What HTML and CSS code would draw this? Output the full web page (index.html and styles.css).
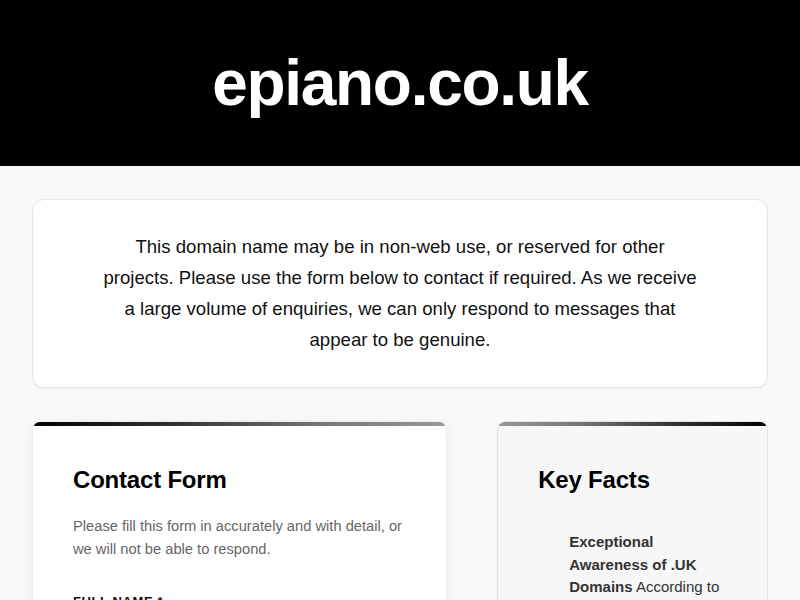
FILE: index.html
```html
<!DOCTYPE html>
<html lang="en">
<head>
<meta charset="utf-8">
<title>epiano.co.uk</title>
<link rel="stylesheet" href="styles.css">
</head>
<body>
<header class="site-header">
  <h1 class="site-title">epiano.co.uk</h1>
</header>
<main class="container">
  <section class="notice">
    <p>This domain name may be in non-web use, or reserved for other projects. Please use the form below to contact if required. As we receive a large volume of enquiries, we can only respond to messages that appear to be genuine.</p>
  </section>
  <div class="columns">
    <section class="card card-form">
      <h2 class="card-title">Contact Form</h2>
      <p class="card-intro">Please fill this form in accurately and with detail, or we will not be able to respond.</p>
      <form class="form">
        <label class="field-label">Full Name *</label>
        <input class="field-input" type="text">
      </form>
    </section>
    <aside class="card card-facts">
      <h2 class="card-title">Key Facts</h2>
      <ul class="facts">
        <li><strong>Exceptional Awareness of .UK Domains</strong> According to research, the vast majority of UK consumers recognise .uk domains.</li>
      </ul>
    </aside>
  </div>
</main>
</body>
</html>
```

FILE: styles.css
```css
* { box-sizing: border-box; }
html, body { margin: 0; padding: 0; }
body {
  font-family: "Liberation Sans", Arial, sans-serif;
  background: #f9f9f9;
  color: #000;
}
.site-header {
  background: #000;
  padding: 48px 16px;
  text-align: center;
}
.site-title {
  margin: 0;
  color: #fff;
  font-size: 64px;
  line-height: 70px;
  font-weight: 700;
  letter-spacing: -1.3px;
}
.container {
  padding: 33px 32px 40px;
}
.notice {
  background: #fff;
  border: 1px solid #e6e6e6;
  border-radius: 12px;
  padding: 31px 32px 32px;
  box-shadow: 0 1px 3px rgba(0,0,0,0.04);
}
.notice p {
  max-width: 600px;
  margin: 0 auto;
  text-align: center;
  font-size: 18.6px;
  line-height: 31px;
  color: #111;
}
.columns {
  margin-top: 33px;
  display: grid;
  grid-template-columns: 414fr 270fr;
  gap: 50px;
  align-items: start;
}
.card {
  position: relative;
  border-radius: 8px;
  overflow: hidden;
  padding: 43px 40px 40px;
}
.card::before {
  content: "";
  position: absolute;
  left: 0; right: 0; top: 0;
  height: 4px;
}
.card-form {
  background: #fff;
  border: 1px solid #ececec;
  box-shadow: 0 4px 14px rgba(0,0,0,0.06);
  min-height: 300px;
}
.card-form::before {
  background: linear-gradient(90deg, #000 0%, #333 35%, #777 70%, #999 100%);
}
.card-facts {
  background: #f7f7f7;
  border: 1px solid #e3e3e3;
  min-height: 300px;
}
.card-facts::before {
  background: linear-gradient(90deg, #999 0%, #777 30%, #333 65%, #000 100%);
}
.card-title {
  margin: 0;
  font-size: 24px;
  line-height: 30px;
  font-weight: 700;
  letter-spacing: -0.2px;
}
.card-intro {
  margin: 20px 0 0;
  font-size: 14.7px;
  line-height: 23px;
  color: #666;
}
.form { margin-top: 33px; }
.field-label {
  display: block;
  font-size: 13px;
  font-weight: 700;
  text-transform: uppercase;
  letter-spacing: 0.6px;
  color: #111;
}
.field-input {
  display: block;
  width: 100%;
  margin-top: 8px;
  height: 44px;
  border: 1px solid #ddd;
  border-radius: 6px;
}
.facts {
  list-style: none;
  margin: 36px 0 0;
  padding: 0 0 0 31px;
}
.facts li {
  font-size: 15px;
  line-height: 22.5px;
  color: #333;
}
.facts strong { color: #333; }
```
